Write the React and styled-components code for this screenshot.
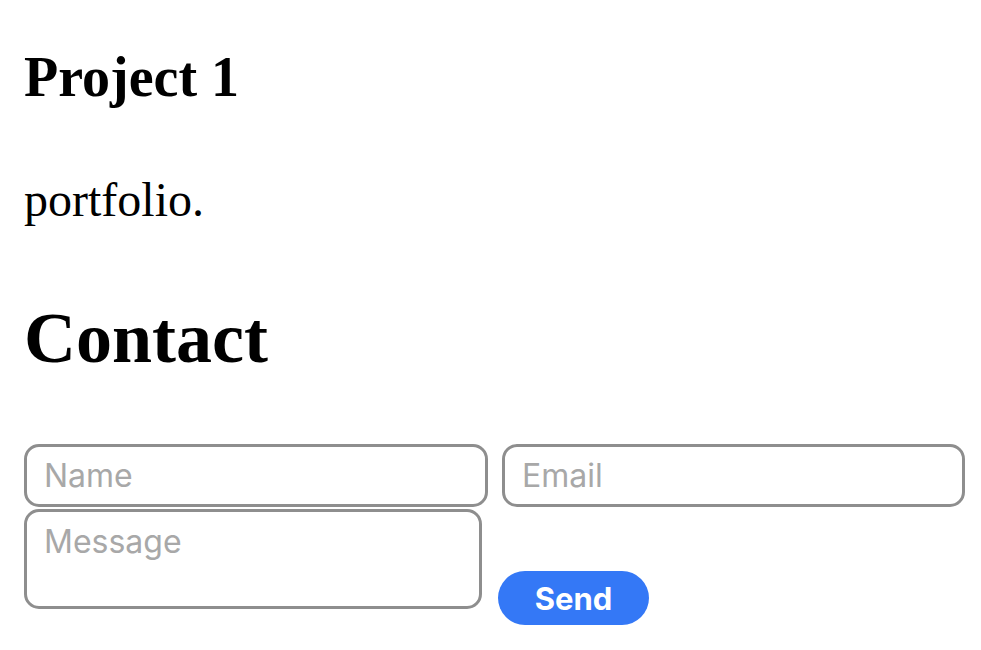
import React from 'react';
import styled, { createGlobalStyle } from 'styled-components';

const GlobalStyle = createGlobalStyle`
  html, body {
    margin: 0;
    padding: 0;
    background: #ffffff;
  }
  body {
    font-family: "Liberation Serif", "Times New Roman", serif;
    color: #000;
  }
`;

const Page = styled.main`
  padding: 0 24px 24px;
`;

const ProjectTitle = styled.h3`
  font-size: 56px;
  font-weight: bold;
  line-height: 64px;
  margin: 0;
  padding-top: 45px;
`;

const Description = styled.p`
  font-size: 48px;
  line-height: 55px;
  margin: 63px 0 0;
`;

const SectionTitle = styled.h2`
  font-size: 72px;
  font-weight: bold;
  line-height: 82px;
  margin: 70px 0 0;
`;

const Form = styled.form`
  display: flex;
  flex-direction: column;
  gap: 2px;
  margin-top: 65px;
`;

const Row = styled.div`
  display: flex;
  align-items: flex-end;
  gap: ${(p) => p.$gap || 14}px;
`;

const fieldBase = `
  box-sizing: border-box;
  border: 3px solid #8e8e8e;
  border-radius: 15px;
  background: #fff;
  font-family: Inter, "Noto Sans", sans-serif;
  font-size: 32px;
  color: #000;
  outline: none;
  &::placeholder {
    color: #a8a8a8;
  }
`;

const Input = styled.input`
  ${fieldBase}
  width: ${(p) => p.$w}px;
  height: 63px;
  padding: 0 17px;
`;

const TextArea = styled.textarea`
  ${fieldBase}
  width: 458px;
  height: 100px;
  margin-bottom: 16px;
  padding: 10px 17px;
  resize: none;
`;

const SendButton = styled.button`
  box-sizing: border-box;
  width: 151px;
  height: 54px;
  padding: 0;
  border: none;
  border-radius: 27px;
  background: #3478f6;
  color: #fff;
  font-family: Inter, "Noto Sans", sans-serif;
  font-weight: 700;
  font-size: 31px;
  cursor: pointer;
`;

export default function App() {
  return (
    <>
      <GlobalStyle />
      <Page>
        <ProjectTitle>Project 1</ProjectTitle>
        <Description>portfolio.</Description>
        <SectionTitle>Contact</SectionTitle>
        <Form onSubmit={(e) => e.preventDefault()}>
          <Row>
            <Input $w={464} placeholder="Name" />
            <Input $w={463} placeholder="Email" />
          </Row>
          <Row $gap={16}>
            <TextArea placeholder="Message" />
            <SendButton type="submit">Send</SendButton>
          </Row>
        </Form>
      </Page>
    </>
  );
}
